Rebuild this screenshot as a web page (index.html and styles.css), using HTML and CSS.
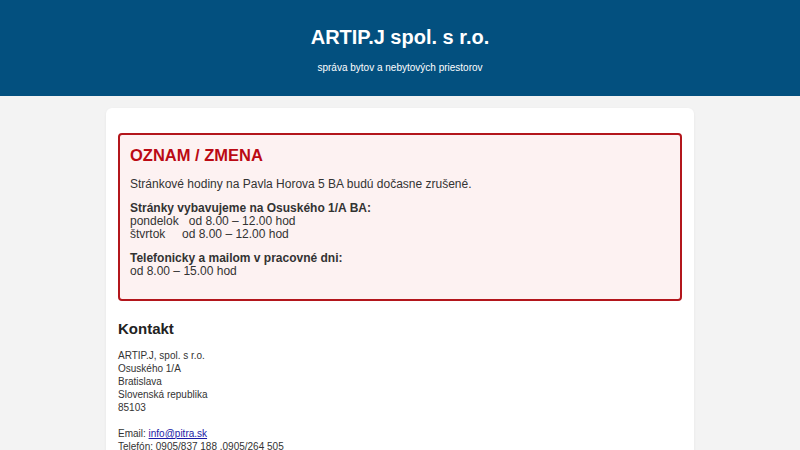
FILE: index.html
```html
<!DOCTYPE html>
<html lang="sk">
<head>
<meta charset="utf-8">
<title>ARTIP.J spol. s r.o.</title>
<link rel="stylesheet" href="styles.css">
</head>
<body>
<header class="site-header">
  <h1 class="site-title">ARTIP.J spol. s r.o.</h1>
  <p class="site-tagline">správa bytov a nebytových priestorov</p>
</header>
<main class="card">
  <section class="notice">
    <h2 class="notice-title">OZNAM / ZMENA</h2>
    <p>Stránkové hodiny na Pavla Horova 5 BA budú dočasne zrušené.</p>
    <p><strong>Stránky vybavujeme na Osuského 1/A BA:</strong><br>
      pondelok&nbsp;&nbsp;&nbsp;od 8.00 – 12.00 hod<br>
      štvrtok&nbsp;&nbsp;&nbsp;&nbsp;&nbsp;od 8.00 – 12.00 hod</p>
    <p><strong>Telefonicky a mailom v pracovné dni:</strong><br>
      od 8.00 – 15.00 hod</p>
  </section>
  <section class="contact">
    <h2 class="contact-title">Kontakt</h2>
    <p>ARTIP.J, spol. s r.o.<br>
      Osuského 1/A<br>
      Bratislava<br>
      Slovenská republika<br>
      85103</p>
    <p>Email: <a href="mailto:info@pitra.sk">info@pitra.sk</a><br>
      Telefón: 0905/837 188 ,0905/264 505</p>
  </section>
</main>
</body>
</html>
```
FILE: styles.css
```css
* { box-sizing: border-box; }

body {
  margin: 0;
  background: #f3f3f3;
  font-family: "Liberation Sans", Arial, sans-serif;
  color: #333;
}

.site-header {
  background: #03507f;
  color: #fff;
  text-align: center;
  padding: 25px 0 21px;
}

.site-title {
  margin: 0;
  font-size: 20px;
  line-height: 25px;
  font-weight: bold;
}

.site-tagline {
  margin: 11px 0 0;
  font-size: 10px;
  line-height: 14px;
}

.card {
  width: 588px;
  margin: 12px auto 0;
  background: #fff;
  border-radius: 6px;
  box-shadow: 0 1px 3px rgba(0, 0, 0, 0.06);
  padding: 25px 12px 20px;
}

.notice {
  border: 2px solid #b3161c;
  border-radius: 4px;
  background: #fdf2f2;
  padding: 10px 10px;
  font-size: 12px;
  line-height: 13px;
}

.notice-title {
  margin: 0 0 12px;
  color: #bb0a14;
  font-size: 16.5px;
  line-height: 21px;
  font-weight: bold;
}

.notice p {
  margin: 11px 0;
}

.notice p:first-of-type { margin-top: 0; }

.contact-title {
  margin: 19px 0 12px;
  font-size: 15px;
  line-height: 17px;
  font-weight: bold;
  color: #222;
}

.contact p {
  margin: 0 0 13px;
  font-size: 10px;
  line-height: 13px;
}

.contact a { color: #1a1aa6; }
```
